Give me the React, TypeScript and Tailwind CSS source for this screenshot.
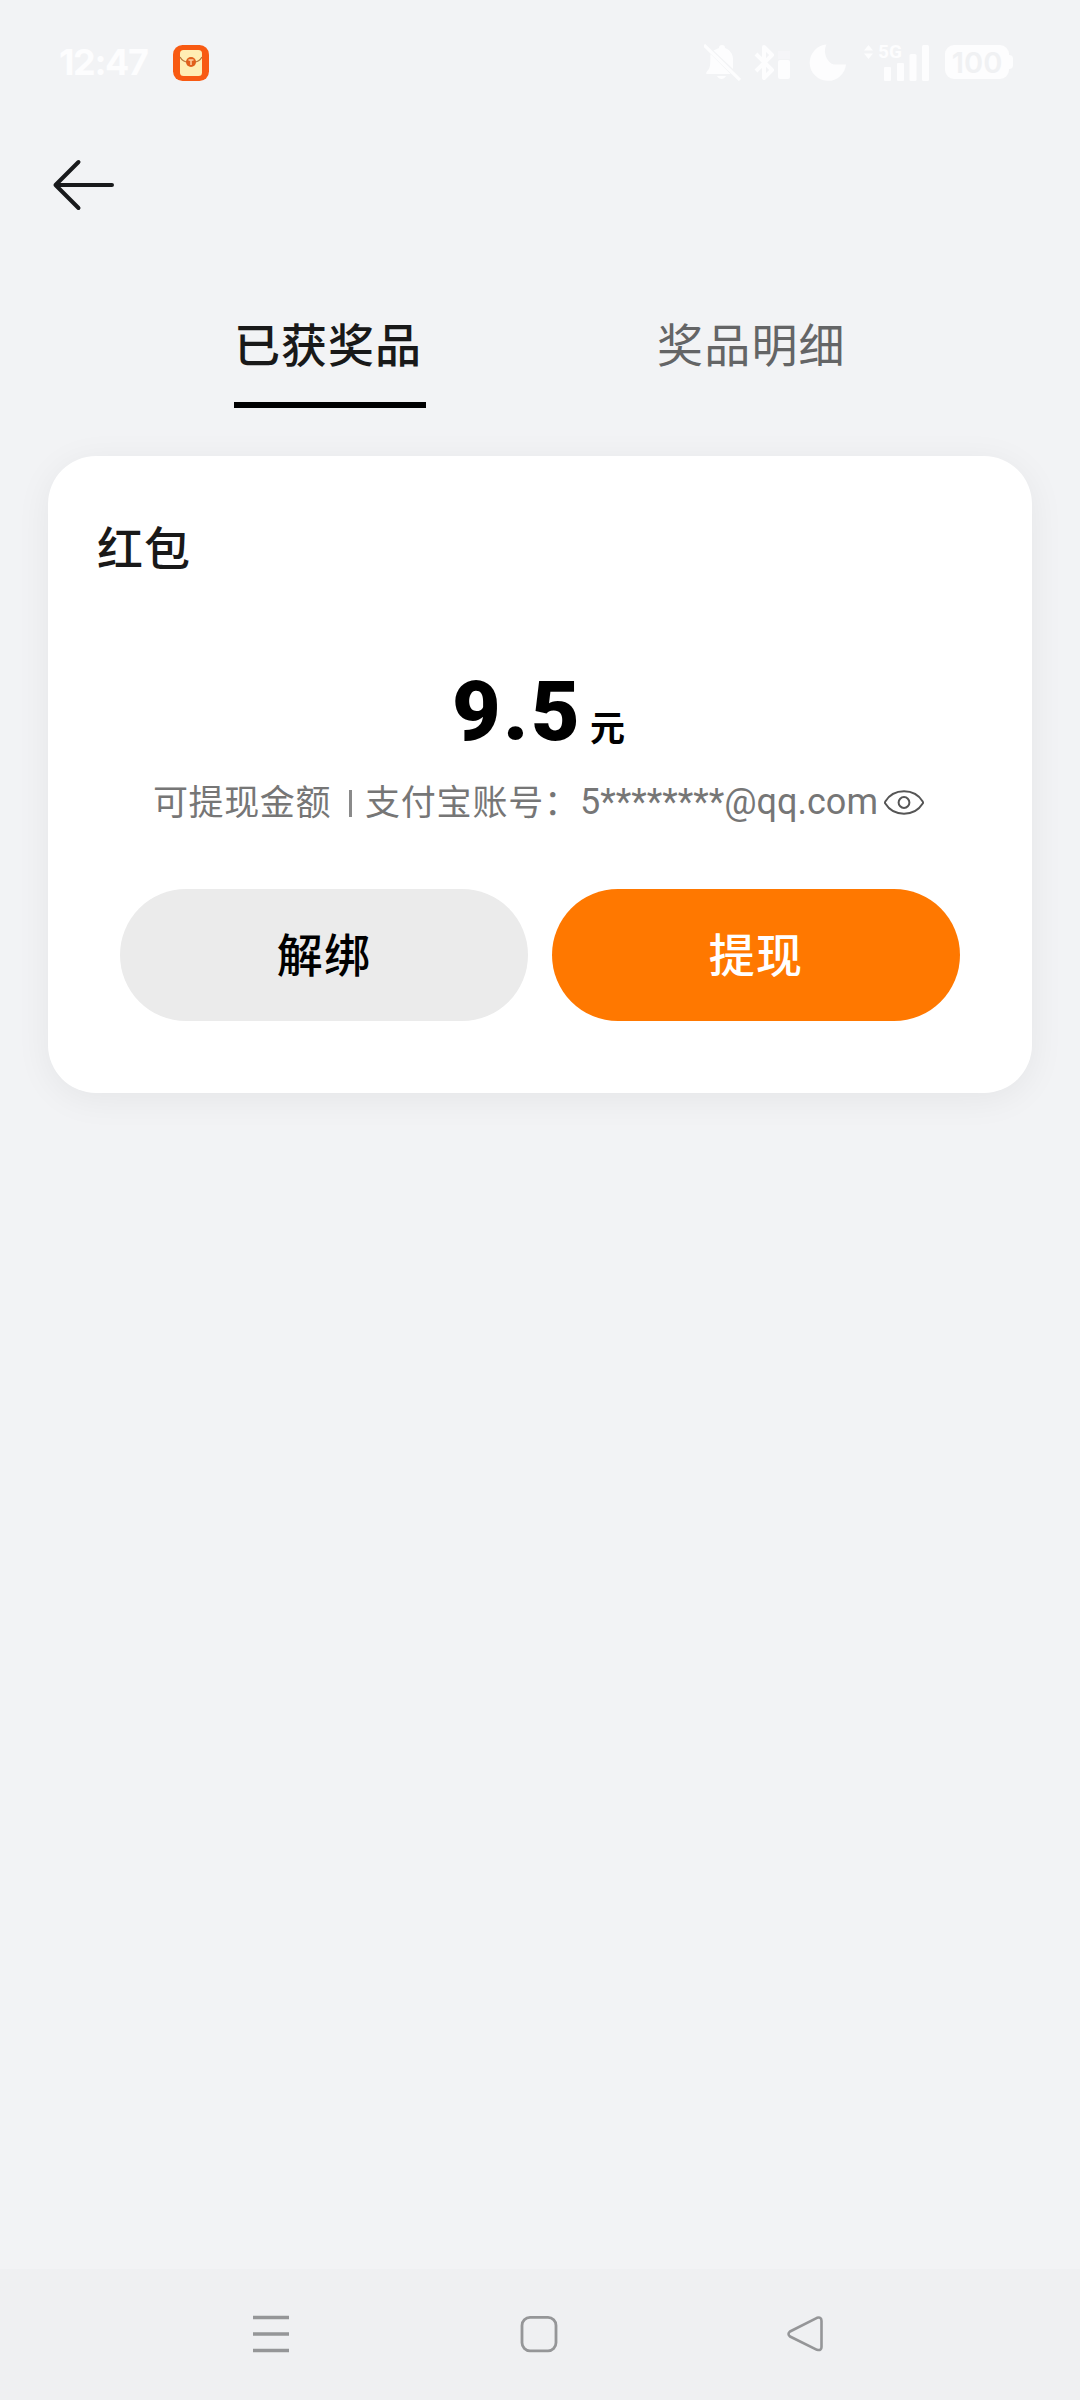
import type { ReactNode } from "react";

function StatusBar() {
  return (
    <header className="flex h-[124px] items-start justify-between pt-[43px] pr-[67px] pl-[59px] text-[#fdfdfe]">
      <div className="flex h-[38px] items-center">
        <span className="w-[114px] font-['Inter','Noto_Sans_CJK_SC',sans-serif] text-[36px] leading-none font-bold tracking-[-1.4px] whitespace-nowrap">
          12:47
        </span>
        <svg width="36" height="36" viewBox="0 0 36 36" className="mt-px">
          <rect width="36" height="36" rx="9.500" fill="#f85a12" />
          <rect x="7" y="5" width="22" height="26" rx="3.500" fill="#ffeeb4" />
          <path d="M7 12c2 3.500 5 5 8 5M29 12c-2 3.500-5 5-8 5" fill="none" stroke="#b7773c" strokeWidth="1.300" />
          <circle cx="18" cy="17" r="5" fill="#e0601c" />
          <path d="M15.500 15h5M18 15v5" fill="none" stroke="#ffd0a0" strokeWidth="1.500" />
        </svg>
      </div>
      <div className="flex h-[38px] items-center">
        <svg width="37" height="37" viewBox="0 0 37 37" className="mr-[12px]" fill="currentColor">
          <path d="M15 4a3 3 0 0 1 6 0c5 2 8 6 8 11v10L9.500 6.500zM6.500 10 26.500 30H2.500c-1-1 0-2.500 2-4.500 2.500-3 1.500-10 2-15.500zM13 32h9c-2 4-7 4-9 0z" />
          <path d="M0 1 36 36" stroke="currentColor" strokeWidth="3.200" />
        </svg>
        <svg width="38" height="37" viewBox="0 0 38 37" className="mr-[18px]">
          <path d="M3 10 19 26l-8 8V3l8 8L3 27" fill="none" stroke="currentColor" strokeWidth="4" strokeLinejoin="round" />
          <rect x="25" y="16" width="12" height="19" rx="2" fill="currentColor" />
          <rect x="25" y="7" width="12" height="8" fill="currentColor" opacity=".3" />
        </svg>
        <svg width="38" height="37" viewBox="0 0 38 37" className="mr-[17px]">
          <path d="M17.500 .5A18.200 18.200 0 1 0 37 20.500H26C19 20.500 13 9 17.500 .5z" fill="currentColor" />
        </svg>
        <div className="relative mr-[16px] h-[37px] w-[65px]">
          <svg width="65" height="37" viewBox="0 0 65 37" fill="currentColor">
            <path d="M0 6.500 4.500 1 9 6.500zM0 9.500 4.500 15 9 9.500z" />
            <rect x="20" y="23" width="7" height="14" rx="1" />
            <rect x="33" y="19" width="7" height="18" rx="1" />
            <rect x="45.500" y="10" width="7" height="27" rx="1.500" />
            <rect x="58" y="1" width="7" height="36" rx="1.500" />
          </svg>
          <span className="absolute top-[-1px] left-[14px] font-['Roboto',sans-serif] text-[19px] leading-[18px] font-bold">5G</span>
        </div>
        <div className="flex items-center">
          <div className="flex h-[34px] w-[64px] items-center justify-center rounded-[9px] bg-[#fdfdfe] font-['Inter',sans-serif] text-[29px] leading-none font-semibold text-[#f0f1f3]">
            100
          </div>
          <div className="h-[14px] w-[4px] rounded-r-[4px] bg-[#fdfdfe]" />
        </div>
      </div>
    </header>
  );
}

function Tab({ active, children }: { active?: boolean; children: ReactNode }) {
  return (
    <button className="flex flex-1 justify-center">
      <span
        className={
          active
            ? "h-[102px] w-[192px] border-b-[6px] border-black pt-px text-left text-[46px] leading-[70px] font-medium tracking-[1px] text-[#191919]"
            : "h-[102px] w-[192px] pt-px pl-[3px] text-left text-[46px] leading-[70px] tracking-[1.2px] text-[#646566]"
        }
      >
        {children}
      </span>
    </button>
  );
}

function PrizeCard() {
  return (
    <section className="mx-12 mt-12 h-[637px] rounded-[48px] bg-white px-[72px] pt-[53px] shadow-[0_6px_36px_rgba(0,0,0,0.06)]">
      <h2 className="-ml-[23px] h-[75px] text-[46px] leading-[72px] font-medium tracking-[1px] text-[#191919]">红包</h2>
      <div className="mt-[78px] flex h-[100px] items-baseline pl-[332px] text-black">
        <span className="font-['Roboto',sans-serif] text-[84px] leading-[100px] font-black tracking-[2.4px]">9.5</span>
        <span className="relative top-px ml-[8px] text-[35px] font-bold">元</span>
      </div>
      <div className="mt-[12px] flex h-[56px] items-center pl-[33px] text-[35px] leading-[54px] whitespace-nowrap text-[#767676]">
        <span className="-mt-[4px] tracking-[0.6px]">可提现金额</span>
        <span className="mt-[2px] mr-[13px] ml-[18px] h-[27px] w-[3px] bg-[#8a8a8a]" />
        <span className="-mt-[4px] w-[215px] tracking-[0.8px]">支付宝账号：</span>
        <span className="font-['Roboto',sans-serif] text-[36px]">5********@qq.com</span>
        <svg width="40" height="25" viewBox="0 0 40 25" fill="none" stroke="#555" strokeWidth="2" className="ml-[6px]">
          <path d="M1.300 13.500q-.8-1 0-2C5 5.500 11.500 1.300 20 1.300s15 4.200 18.700 10.200q.8 1 0 2C35 19.500 28.500 23.700 20 23.700S5 19.500 1.300 13.500z" />
          <circle cx="20" cy="12.500" r="5.400" />
        </svg>
      </div>
      <div className="mt-[59px] flex gap-6 text-[46px] font-medium tracking-[1.2px]">
        <button className="h-[132px] flex-1 rounded-full bg-[#ebebeb] pb-[6px] text-black">解绑</button>
        <button className="h-[132px] flex-1 rounded-full bg-[#ff7800] pb-[6px] text-white">提现</button>
      </div>
    </section>
  );
}

function NavigationBar() {
  return (
    <nav className="mt-auto flex h-[131px] items-start justify-between bg-[#eff0f2] pt-[46px] pr-[255px] pl-[252px] text-[#959698]">
      <svg width="38" height="38" viewBox="0 0 38 38" stroke="currentColor" strokeWidth="3.400">
        <path d="M1 2.500h36M1 19h36M1 35.500h36" />
      </svg>
      <svg width="38" height="38" viewBox="0 0 38 38" fill="none" stroke="currentColor" strokeWidth="2.800">
        <rect x="2" y="2.400" width="34" height="33.400" rx="8" />
      </svg>
      <svg width="38" height="38" viewBox="0 0 38 38" fill="none" stroke="currentColor" strokeWidth="2.600" strokeLinejoin="round">
        <path d="M3 16.500 30 2.800Q34.500 1.500 34.500 6V32Q34.500 36 30 34.800L3 21.500Q0 19 3 16.500z" />
      </svg>
    </nav>
  );
}

export default function App() {
  return (
    <div className="flex h-[2400px] w-[1080px] flex-col overflow-hidden bg-[#f2f3f5] font-['Noto_Sans_CJK_SC',sans-serif]">
      <StatusBar />
      <div className="flex h-[182px] pt-[35px] pl-[52px]">
        <svg width="64" height="52" viewBox="0 0 64 52" fill="none" stroke="#191a1c" strokeWidth="4" strokeLinecap="round" strokeLinejoin="round">
          <path d="M60 26H3.500M26.500 3 3.500 26l23 23" />
        </svg>
      </div>
      <div className="flex px-[120px]">
        <Tab active>已获奖品</Tab>
        <Tab>奖品明细</Tab>
      </div>
      <PrizeCard />
      <NavigationBar />
    </div>
  );
}
